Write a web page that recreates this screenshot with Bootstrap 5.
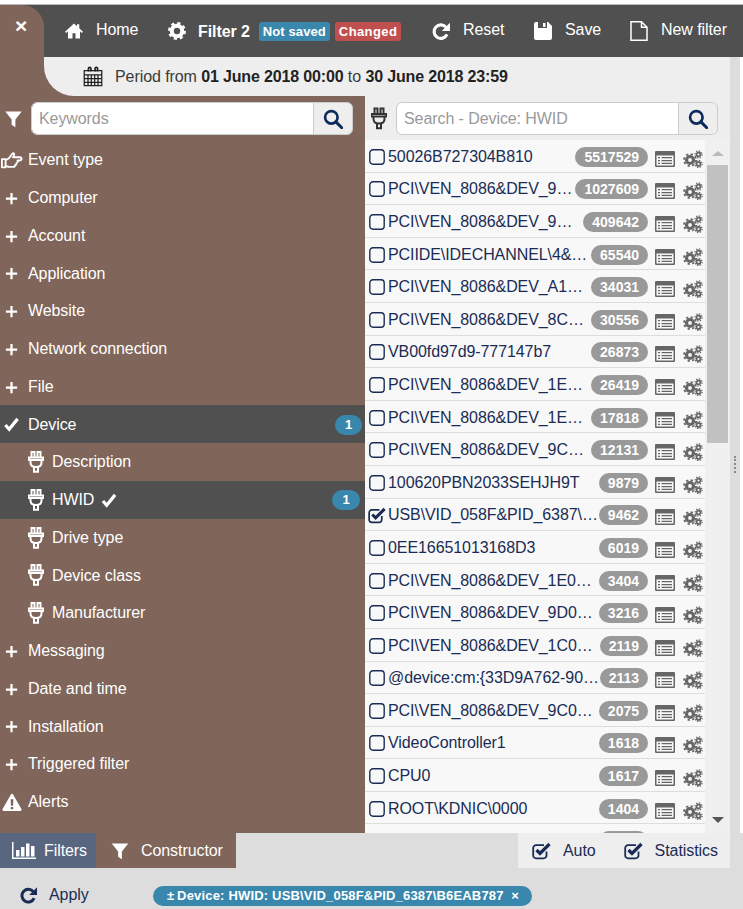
<!DOCTYPE html>
<html lang="en">
<head>
<meta charset="utf-8">
<title>Filter 2</title>
<link href="https://cdn.jsdelivr.net/npm/bootstrap@5.3.0/dist/css/bootstrap.min.css" rel="stylesheet">
<style>
:root{--brown:#80655a;--dark:#505050;--navy:#1a2c55;--blue:#3a87ad;}
html,body{height:100%;}
body{margin:0;background:#fff;font-family:"Liberation Sans",Arial,sans-serif;font-size:16px;color:#333;overflow:hidden;letter-spacing:-.08px;}
.shell{width:743px;height:909px;padding-top:4px;display:flex;flex-direction:column;}
.shell-top{display:flex;height:92px;border-top:1px solid #bbb;flex:none;}
.close-col{width:44px;flex:none;background:var(--dark);}
.close-tab{height:100%;background:var(--brown);border-top-right-radius:22px;color:#fff;font-weight:700;font-size:21px;line-height:1;text-align:center;padding:10px 2px 0 0;}
.top-right{flex:1;display:flex;flex-direction:column;min-width:0;}
.mainbar{height:52px;flex:none;background:var(--dark);color:#fff;display:flex;align-items:center;padding-left:21px;}
.bar-item{display:flex;align-items:center;color:#fff;text-decoration:none;}
.bar-item svg{width:18px;height:20px;margin-right:13px;flex:none;}
.bar-item span{position:relative;top:-1px;}
.b-home{width:103px;}.b-filter{width:264px;}.b-reset{width:102px;}.b-save{width:96px;}
.b-filter svg{margin-right:12px;}
.b-filter span.fname{top:1px;}
.b-filter b{font-weight:700;}
.tag{font-size:13px;font-weight:700;padding:3px 4px;border-radius:3px;line-height:13px;height:19px;margin-left:5px;color:#fff;top:0!important;letter-spacing:.1px;}
.tag-first{margin-left:9px;background:var(--blue);}
.tag-red{background:#c0504f;letter-spacing:.4px;}
.period-row{flex:1;display:flex;background:var(--brown);}
.period{flex:1;background:#eee;border-bottom-left-radius:30px;display:flex;align-items:center;padding-left:39px;color:#3a3a3a;}
.period svg{width:20px;height:21px;margin-right:12px;flex:none;}
.period b{color:#222;letter-spacing:-.15px;}
.splitter{width:10px;flex:none;background:#ddd;}
.grip{display:flex;align-items:center;justify-content:center;}
.grip i{display:block;height:17px;border-left:2px dotted #8a8a8a;}
.edge{width:3px;flex:none;background:#fff;}
.workarea{height:737px;flex:none;display:flex;}
.side{width:365px;flex:none;background:var(--brown);color:#fff;overflow:hidden;}
.side-search{height:45px;display:flex;align-items:center;padding:0 12px 0 4px;}
.side-search>svg{width:19px;height:18px;margin-right:8px;flex:none;}
.search-group{height:33px;flex-wrap:nowrap;}
.search-group .form-control{height:33px;padding:0 7px;font-size:16px;letter-spacing:-.08px;border-color:#ccc;box-shadow:none;color:#555;}
.search-group .form-control::placeholder{color:#999;}
.search-group .btn{width:40px;height:33px;padding:0;background:#eee;border:1px solid #ccc;display:flex;align-items:center;justify-content:center;}
.search-group .btn svg{width:20px;height:20px;}
.side-list{background:transparent;border-radius:0;}
.side-item{height:37.75px;padding:1px 3px 0 28px;background:transparent;color:#fff;border:0;display:flex;align-items:center;position:relative;border-radius:0!important;}
.side-item.on{background:var(--dark);}
.side-item>svg.lead-i{position:absolute;left:4px;width:15px;height:15px;top:12px;}
.side-item.wide>svg.lead-i{left:1px;width:22px;height:18px;top:10px;}
.side-item.sub{padding-left:52px;}
.side-item.sub>svg.lead-i{left:28px;width:16px;height:22px;top:8px;}
.side-item .inline-check{width:16px;height:15px;margin-left:7px;}
.count{background:var(--blue);font-size:13px;font-weight:700;width:27px;height:20px;padding:0;line-height:20px;margin-left:auto;}
.sub .count{width:28px;margin-right:2px;}
.device-pane{width:365px;flex:none;background:#eee;display:flex;flex-direction:column;min-height:0;}
.device-search{height:44px;flex:none;display:flex;align-items:center;padding:1px 12px 0 6px;}
.device-search>svg{width:16px;height:23px;margin-right:9px;flex:none;}
.device-body{flex:1;display:flex;min-height:0;}
.device-list{width:340px;flex:none;background:#f8f8f8;overflow:hidden;border-radius:0;}
.dev-row{height:32.6px;flex:none;padding:2px 2px 0 4px;background:transparent;border:0;border-bottom:1px solid #ddd;border-radius:0!important;display:flex;align-items:center;color:var(--navy);}
.dev-row .txt{flex:1;min-width:0;padding:0 0 0 3px;}
.ck{width:16px;height:16px;flex:none;}
.ck-on{width:19px;height:18px;margin-left:-1px;margin-right:-2px;}
.hits{background:#999;font-size:14px;font-weight:700;letter-spacing:0;line-height:20px;padding:0 9px;height:20px;flex:none;}
.i-l{width:20px;height:16px;margin-left:7px;flex:none;position:relative;top:2px;}
.i-c{width:20px;height:18px;margin-left:8px;flex:none;position:relative;top:2px;}
.scroller{width:25px;flex:none;background:#f0f0f0;display:flex;flex-direction:column;align-items:center;padding-bottom:10px;}
.scroller i{display:block;width:0;height:0;border-left:6px solid transparent;border-right:6px solid transparent;}
.up{border-bottom:5px solid #bbb;margin:11px 0 9px;}
.thumb{width:21px;height:278px;background:#c1c1c1;}
.down{border-top:6px solid #555;margin-top:auto;}
.tabbar{height:35px;flex:none;background:#ddd;display:flex;}
.tab-f{width:96px;background:#59667f;color:#fff;display:flex;align-items:center;padding-left:12px;}
.tab-f svg{width:24px;height:17px;margin-right:8px;flex:none;}
.tab-c{width:140px;background:var(--brown);color:#fff;display:flex;align-items:center;padding-left:15px;}
.tab-c svg{width:18px;height:18px;margin-right:12px;flex:none;}
.opts{margin-left:282px;width:212px;background:#eee;color:var(--navy);display:flex;align-items:center;padding-left:14px;}
.opts svg{width:20px;height:19px;margin-right:11px;flex:none;}
.opts span{margin-right:28px;}
.opts span:last-child{margin-right:0;}
.foot{flex:1;background:#ddd;display:flex;align-items:center;padding:13px 0 0 20px;color:var(--navy);}
.foot>svg{width:17px;height:18px;margin-right:12px;flex:none;}
.foot>span.apply{width:104px;}
.chip{background:var(--blue);color:#fff;font-size:13px;font-weight:700;letter-spacing:.18px;height:20px;line-height:20px;padding:0 0 0 14px;width:379px;text-align:left;margin-top:2px;}
</style>
</head>
<body>
<svg width="0" height="0" class="position-absolute" aria-hidden="true">
<defs>
<symbol id="i-home" viewBox="0 2 24 22"><path fill="currentColor" d="M12 3 0 14l1.500 1.500L4 13.400V23h6v-7h4v7h6v-9.600l2.500 2.100L24 14l-5-4.600V4h-3v2.700z"/></symbol>
<symbol id="i-cog" viewBox="0 0 24 24"><circle cx="12" cy="12" r="7" fill="none" stroke="currentColor" stroke-width="5.500"/><circle cx="12" cy="12" r="10.500" fill="none" stroke="currentColor" stroke-width="3" stroke-dasharray="4.250 4"/></symbol>
<symbol id="i-redo" viewBox="0 0 24 24"><path d="M19 7.500A9 9 0 1 0 20 16.500" fill="none" stroke="currentColor" stroke-width="4.200"/><path fill="currentColor" d="M24 1v11H13z"/></symbol>
<symbol id="i-save" viewBox="0 0 18 18"><path fill="currentColor" fill-rule="evenodd" d="M0 2a2 2 0 0 1 2-2h12l4 4v12a2 2 0 0 1-2 2H2a2 2 0 0 1-2-2zM4 0v6h9V0zM9 1h2.500v4H9z"/></symbol>
<symbol id="i-file" viewBox="0 0 18 20"><path d="M1 .8h10.500L17 6.300V19.200H1zM11.500 .8v5.500H17" fill="none" stroke="currentColor" stroke-width="1.500"/></symbol>
<symbol id="i-cal" viewBox="0 0 24 24"><path fill="none" stroke="#222" stroke-width="1.500" d="M1.500 5h21v18h-21zM1.500 10h21M1.500 14.500h21M1.500 19h21M6 10v13M10 10v13M14 10v13M18 10v13"/><path fill="none" stroke="#222" stroke-width="2" d="M6.500 6V2.500a1.500 1.500 0 0 1 3 0V6M14.500 6V2.500a1.500 1.500 0 0 1 3 0V6"/></symbol>
<symbol id="i-filter" viewBox="0 0 24 24"><path fill="currentColor" d="M1 2h22L14.500 12.500V23l-5-3.500v-7z"/></symbol>
<symbol id="i-search" viewBox="0 0 24 24"><circle cx="10" cy="10" r="7.500" fill="none" stroke="#0d2a5c" stroke-width="3.200"/><path d="m15.500 15.500 7 7" stroke="#0d2a5c" stroke-width="3.600" stroke-linecap="round"/></symbol>
<symbol id="i-hand" viewBox="0 0 24 18"><path fill="none" stroke="currentColor" stroke-width="2" stroke-linejoin="round" d="M1 8h4v9H1zM5 9c2.500-.6 4.500-2.500 6-5 .8-1.600 1.500-2.800 2.700-2.500 1.200.4 1 2.400-.7 4.500h7.500c2.600 0 2.600 3.500 0 3.500H18c.8 1.400-.1 2.500-1.200 2.800.3 1.200-.4 2.200-1.500 2.400 0 1.100-.8 1.800-2 1.800H9c-1.600 0-2.600-.8-4-1"/></symbol>
<symbol id="i-plus" viewBox="0 0 16 16"><path fill="currentColor" d="M6.800 2h2.400v4.800H14v2.400H9.200V14H6.800V9.200H2V6.800h4.800z"/></symbol>
<symbol id="i-check" viewBox="0 0 16 16"><path fill="none" stroke="currentColor" stroke-width="3.400" d="m1.500 8.500 4 4.500 9-11"/></symbol>
<symbol id="i-plug" viewBox="0 0 16 22"><path fill="none" stroke="currentColor" stroke-width="2" d="M3.500 6V1h3v5M9.500 6V1h3v5M.8 6.500h14.400v2.400H.8zM2.500 9v2.500C2.500 14 4.500 16 8 16s5.500-2 5.500-4.500V9M6 16h4v4.800H6z"/></symbol>
<symbol id="i-warn" viewBox="0 0 24 22"><path fill="currentColor" fill-rule="evenodd" d="M12 1c.7 0 1.200.4 1.500 1l10 17.500c.6 1.200-.2 2.500-1.500 2.500H2c-1.300 0-2.100-1.300-1.500-2.500l10-17.500c.3-.6.800-1 1.500-1zM10.300 7.500l.4 8h2.600l.4-8zM10.500 17v3h3v-3z"/></symbol>
<symbol id="i-bars" viewBox="0 0 24 17"><path fill="currentColor" d="M0 0h1.500v15.500H24V17H0zM4 8h3.500v6.500H4zM9 5h3.500v9.500H9zM14 1.500h3.500v13H14zM19 4h3.500v10.500H19z"/></symbol>
<symbol id="i-cbox" viewBox="0 0 15 15"><rect x=".75" y=".75" width="13.500" height="13.500" rx="3" fill="none" stroke="#1a2c55" stroke-width="1.300"/></symbol>
<symbol id="i-cchk" viewBox="0 0 20 18"><path d="M14.500 10v4a2.800 2.800 0 0 1-2.800 2.800H4A2.800 2.800 0 0 1 1.200 14V6.500A2.800 2.800 0 0 1 4 3.700h8" fill="none" stroke="#1a2c55" stroke-width="1.800"/><path d="m4.500 8.500 3.500 3.500L17.500 2.500" fill="none" stroke="#1a2c55" stroke-width="3.200"/></symbol>
<symbol id="i-list" viewBox="0 0 20 16"><path fill="#666" fill-rule="evenodd" d="M1 0h18a1 1 0 0 1 1 1v14a1 1 0 0 1-1 1H1a1 1 0 0 1-1-1V1a1 1 0 0 1 1-1zM1.500 4.500v10h17v-10zM3 6h2v1.300H3zM6.500 6H17v1.300H6.500zM3 8.900h2v1.300H3zM6.500 8.900H17v1.300H6.500zM3 11.800h2v1.300H3zM6.500 11.800H17v1.300H6.500z"/></symbol>
<symbol id="i-cogs" viewBox="0 0 20 18"><g fill="none" stroke="#666"><circle cx="7" cy="10" r="3.500" stroke-width="3.200"/><circle cx="7" cy="10" r="6" stroke-width="1.800" stroke-dasharray="2.300 2.400"/><circle cx="15.500" cy="4.500" r="2" stroke-width="1.800"/><circle cx="15.500" cy="4.500" r="3.600" stroke-width="1.200" stroke-dasharray="1.400 1.420"/><circle cx="15.500" cy="14" r="2" stroke-width="1.800"/><circle cx="15.500" cy="14" r="3.600" stroke-width="1.200" stroke-dasharray="1.400 1.420"/></g></symbol>
</defs>
</svg>

<div class="shell">
  <div class="shell-top">
    <div class="close-col"><div class="close-tab">×</div></div>
    <div class="top-right">
      <nav class="mainbar">
        <a class="bar-item b-home" href="#"><svg><use href="#i-home"/></svg><span>Home</span></a>
        <a class="bar-item b-filter" href="#"><svg><use href="#i-cog"/></svg><span class="fname"><b>Filter 2</b></span><span class="tag tag-first">Not saved</span><span class="tag tag-red">Changed</span></a>
        <a class="bar-item b-reset" href="#"><svg><use href="#i-redo"/></svg><span>Reset</span></a>
        <a class="bar-item b-save" href="#"><svg><use href="#i-save"/></svg><span>Save</span></a>
        <a class="bar-item" href="#"><svg><use href="#i-file"/></svg><span>New filter</span></a>
      </nav>
      <div class="period-row">
        <div class="period"><svg><use href="#i-cal"/></svg><span>Period from <b>01 June 2018 00:00</b> to <b>30 June 2018 23:59</b></span></div>
        <div class="splitter"></div><div class="edge"></div>
      </div>
    </div>
  </div>

  <div class="workarea">
    <aside class="side">
      <div class="side-search">
        <svg><use href="#i-filter"/></svg>
        <div class="input-group search-group">
          <input class="form-control" type="text" placeholder="Keywords">
          <button class="btn" type="button"><svg><use href="#i-search"/></svg></button>
        </div>
      </div>
      <ul class="list-group side-list">
        <li class="list-group-item side-item wide"><svg class="lead-i"><use href="#i-hand"/></svg>Event type</li>
        <li class="list-group-item side-item"><svg class="lead-i"><use href="#i-plus"/></svg>Computer</li>
        <li class="list-group-item side-item"><svg class="lead-i"><use href="#i-plus"/></svg>Account</li>
        <li class="list-group-item side-item"><svg class="lead-i"><use href="#i-plus"/></svg>Application</li>
        <li class="list-group-item side-item"><svg class="lead-i"><use href="#i-plus"/></svg>Website</li>
        <li class="list-group-item side-item"><svg class="lead-i"><use href="#i-plus"/></svg>Network connection</li>
        <li class="list-group-item side-item"><svg class="lead-i"><use href="#i-plus"/></svg>File</li>
        <li class="list-group-item side-item on"><svg class="lead-i"><use href="#i-check"/></svg>Device<span class="badge rounded-pill count">1</span></li>
        <li class="list-group-item side-item sub"><svg class="lead-i"><use href="#i-plug"/></svg>Description</li>
        <li class="list-group-item side-item sub on"><svg class="lead-i"><use href="#i-plug"/></svg>HWID<svg class="inline-check"><use href="#i-check"/></svg><span class="badge rounded-pill count">1</span></li>
        <li class="list-group-item side-item sub"><svg class="lead-i"><use href="#i-plug"/></svg>Drive type</li>
        <li class="list-group-item side-item sub"><svg class="lead-i"><use href="#i-plug"/></svg>Device class</li>
        <li class="list-group-item side-item sub"><svg class="lead-i"><use href="#i-plug"/></svg>Manufacturer</li>
        <li class="list-group-item side-item"><svg class="lead-i"><use href="#i-plus"/></svg>Messaging</li>
        <li class="list-group-item side-item"><svg class="lead-i"><use href="#i-plus"/></svg>Date and time</li>
        <li class="list-group-item side-item"><svg class="lead-i"><use href="#i-plus"/></svg>Installation</li>
        <li class="list-group-item side-item"><svg class="lead-i"><use href="#i-plus"/></svg>Triggered filter</li>
        <li class="list-group-item side-item wide"><svg class="lead-i"><use href="#i-warn"/></svg>Alerts</li>
      </ul>
    </aside>

    <section class="device-pane">
      <div class="device-search">
        <svg><use href="#i-plug"/></svg>
        <div class="input-group search-group">
          <input class="form-control" type="text" placeholder="Search - Device: HWID">
          <button class="btn" type="button"><svg><use href="#i-search"/></svg></button>
        </div>
      </div>
      <div class="device-body">
        <ul class="list-group device-list">
          <li class="list-group-item dev-row"><svg class="ck"><use href="#i-cbox"/></svg><span class="txt text-truncate">50026B727304B810</span><span class="badge rounded-pill hits">5517529</span><svg class="i-l"><use href="#i-list"/></svg><svg class="i-c"><use href="#i-cogs"/></svg></li>
          <li class="list-group-item dev-row"><svg class="ck"><use href="#i-cbox"/></svg><span class="txt text-truncate">PCI\VEN_8086&amp;DEV_9D03&amp;SUBSYS_0</span><span class="badge rounded-pill hits">1027609</span><svg class="i-l"><use href="#i-list"/></svg><svg class="i-c"><use href="#i-cogs"/></svg></li>
          <li class="list-group-item dev-row"><svg class="ck"><use href="#i-cbox"/></svg><span class="txt text-truncate">PCI\VEN_8086&amp;DEV_9D10&amp;SUBSYS_0</span><span class="badge rounded-pill hits">409642</span><svg class="i-l"><use href="#i-list"/></svg><svg class="i-c"><use href="#i-cogs"/></svg></li>
          <li class="list-group-item dev-row"><svg class="ck"><use href="#i-cbox"/></svg><span class="txt text-truncate">PCIIDE\IDECHANNEL\4&amp;2A3C5B8&amp;0&amp;0</span><span class="badge rounded-pill hits">65540</span><svg class="i-l"><use href="#i-list"/></svg><svg class="i-c"><use href="#i-cogs"/></svg></li>
          <li class="list-group-item dev-row"><svg class="ck"><use href="#i-cbox"/></svg><span class="txt text-truncate">PCI\VEN_8086&amp;DEV_A1C1&amp;SUBSYS_0</span><span class="badge rounded-pill hits">34031</span><svg class="i-l"><use href="#i-list"/></svg><svg class="i-c"><use href="#i-cogs"/></svg></li>
          <li class="list-group-item dev-row"><svg class="ck"><use href="#i-cbox"/></svg><span class="txt text-truncate">PCI\VEN_8086&amp;DEV_8C10&amp;SUBSYS_0</span><span class="badge rounded-pill hits">30556</span><svg class="i-l"><use href="#i-list"/></svg><svg class="i-c"><use href="#i-cogs"/></svg></li>
          <li class="list-group-item dev-row"><svg class="ck"><use href="#i-cbox"/></svg><span class="txt text-truncate">VB00fd97d9-777147b7</span><span class="badge rounded-pill hits">26873</span><svg class="i-l"><use href="#i-list"/></svg><svg class="i-c"><use href="#i-cogs"/></svg></li>
          <li class="list-group-item dev-row"><svg class="ck"><use href="#i-cbox"/></svg><span class="txt text-truncate">PCI\VEN_8086&amp;DEV_1E10&amp;SUBSYS_0</span><span class="badge rounded-pill hits">26419</span><svg class="i-l"><use href="#i-list"/></svg><svg class="i-c"><use href="#i-cogs"/></svg></li>
          <li class="list-group-item dev-row"><svg class="ck"><use href="#i-cbox"/></svg><span class="txt text-truncate">PCI\VEN_8086&amp;DEV_1E16&amp;SUBSYS_0</span><span class="badge rounded-pill hits">17818</span><svg class="i-l"><use href="#i-list"/></svg><svg class="i-c"><use href="#i-cogs"/></svg></li>
          <li class="list-group-item dev-row"><svg class="ck"><use href="#i-cbox"/></svg><span class="txt text-truncate">PCI\VEN_8086&amp;DEV_9C10&amp;SUBSYS_0</span><span class="badge rounded-pill hits">12131</span><svg class="i-l"><use href="#i-list"/></svg><svg class="i-c"><use href="#i-cogs"/></svg></li>
          <li class="list-group-item dev-row"><svg class="ck"><use href="#i-cbox"/></svg><span class="txt text-truncate">100620PBN2033SEHJH9T</span><span class="badge rounded-pill hits">9879</span><svg class="i-l"><use href="#i-list"/></svg><svg class="i-c"><use href="#i-cogs"/></svg></li>
          <li class="list-group-item dev-row"><svg class="ck ck-on"><use href="#i-cchk"/></svg><span class="txt text-truncate">USB\VID_058F&amp;PID_6387\B6EAB787</span><span class="badge rounded-pill hits">9462</span><svg class="i-l"><use href="#i-list"/></svg><svg class="i-c"><use href="#i-cogs"/></svg></li>
          <li class="list-group-item dev-row"><svg class="ck"><use href="#i-cbox"/></svg><span class="txt text-truncate">0EE16651013168D3</span><span class="badge rounded-pill hits">6019</span><svg class="i-l"><use href="#i-list"/></svg><svg class="i-c"><use href="#i-cogs"/></svg></li>
          <li class="list-group-item dev-row"><svg class="ck"><use href="#i-cbox"/></svg><span class="txt text-truncate">PCI\VEN_8086&amp;DEV_1E03&amp;SUBSYS_0</span><span class="badge rounded-pill hits">3404</span><svg class="i-l"><use href="#i-list"/></svg><svg class="i-c"><use href="#i-cogs"/></svg></li>
          <li class="list-group-item dev-row"><svg class="ck"><use href="#i-cbox"/></svg><span class="txt text-truncate">PCI\VEN_8086&amp;DEV_9D03&amp;SUBSYS_0</span><span class="badge rounded-pill hits">3216</span><svg class="i-l"><use href="#i-list"/></svg><svg class="i-c"><use href="#i-cogs"/></svg></li>
          <li class="list-group-item dev-row"><svg class="ck"><use href="#i-cbox"/></svg><span class="txt text-truncate">PCI\VEN_8086&amp;DEV_1C03&amp;SUBSYS_0</span><span class="badge rounded-pill hits">2119</span><svg class="i-l"><use href="#i-list"/></svg><svg class="i-c"><use href="#i-cogs"/></svg></li>
          <li class="list-group-item dev-row"><svg class="ck"><use href="#i-cbox"/></svg><span class="txt text-truncate">@device:cm:{33D9A762-90C8-11D0}</span><span class="badge rounded-pill hits">2113</span><svg class="i-l"><use href="#i-list"/></svg><svg class="i-c"><use href="#i-cogs"/></svg></li>
          <li class="list-group-item dev-row"><svg class="ck"><use href="#i-cbox"/></svg><span class="txt text-truncate">PCI\VEN_8086&amp;DEV_9C03&amp;SUBSYS_0</span><span class="badge rounded-pill hits">2075</span><svg class="i-l"><use href="#i-list"/></svg><svg class="i-c"><use href="#i-cogs"/></svg></li>
          <li class="list-group-item dev-row"><svg class="ck"><use href="#i-cbox"/></svg><span class="txt text-truncate">VideoController1</span><span class="badge rounded-pill hits">1618</span><svg class="i-l"><use href="#i-list"/></svg><svg class="i-c"><use href="#i-cogs"/></svg></li>
          <li class="list-group-item dev-row"><svg class="ck"><use href="#i-cbox"/></svg><span class="txt text-truncate">CPU0</span><span class="badge rounded-pill hits">1617</span><svg class="i-l"><use href="#i-list"/></svg><svg class="i-c"><use href="#i-cogs"/></svg></li>
          <li class="list-group-item dev-row"><svg class="ck"><use href="#i-cbox"/></svg><span class="txt text-truncate">ROOT\KDNIC\0000</span><span class="badge rounded-pill hits">1404</span><svg class="i-l"><use href="#i-list"/></svg><svg class="i-c"><use href="#i-cogs"/></svg></li>
          <li class="list-group-item dev-row"><svg class="ck"><use href="#i-cbox"/></svg><span class="txt text-truncate"></span><span class="badge rounded-pill hits">1380</span><svg class="i-l"><use href="#i-list"/></svg><svg class="i-c"><use href="#i-cogs"/></svg></li>
        </ul>
        <div class="scroller"><i class="up"></i><div class="thumb"></div><i class="down"></i></div>
      </div>
    </section>
    <div class="splitter grip"><i></i></div><div class="edge"></div>
  </div>

  <div class="tabbar">
    <div class="tab-f"><svg><use href="#i-bars"/></svg>Filters</div>
    <div class="tab-c"><svg><use href="#i-filter"/></svg>Constructor</div>
    <div class="opts"><svg><use href="#i-cchk"/></svg><span>Auto</span><svg><use href="#i-cchk"/></svg><span>Statistics</span></div>
  </div>
  <div class="foot">
    <svg><use href="#i-redo"/></svg><span class="apply">Apply</span>
    <span class="badge rounded-pill chip">±&thinsp;Device: HWID: USB\VID_058F&amp;PID_6387\B6EAB787 &nbsp;×</span>
  </div>
</div>
<script src="https://cdn.jsdelivr.net/npm/bootstrap@5.3.0/dist/js/bootstrap.bundle.min.js"></script>
</body>
</html>
